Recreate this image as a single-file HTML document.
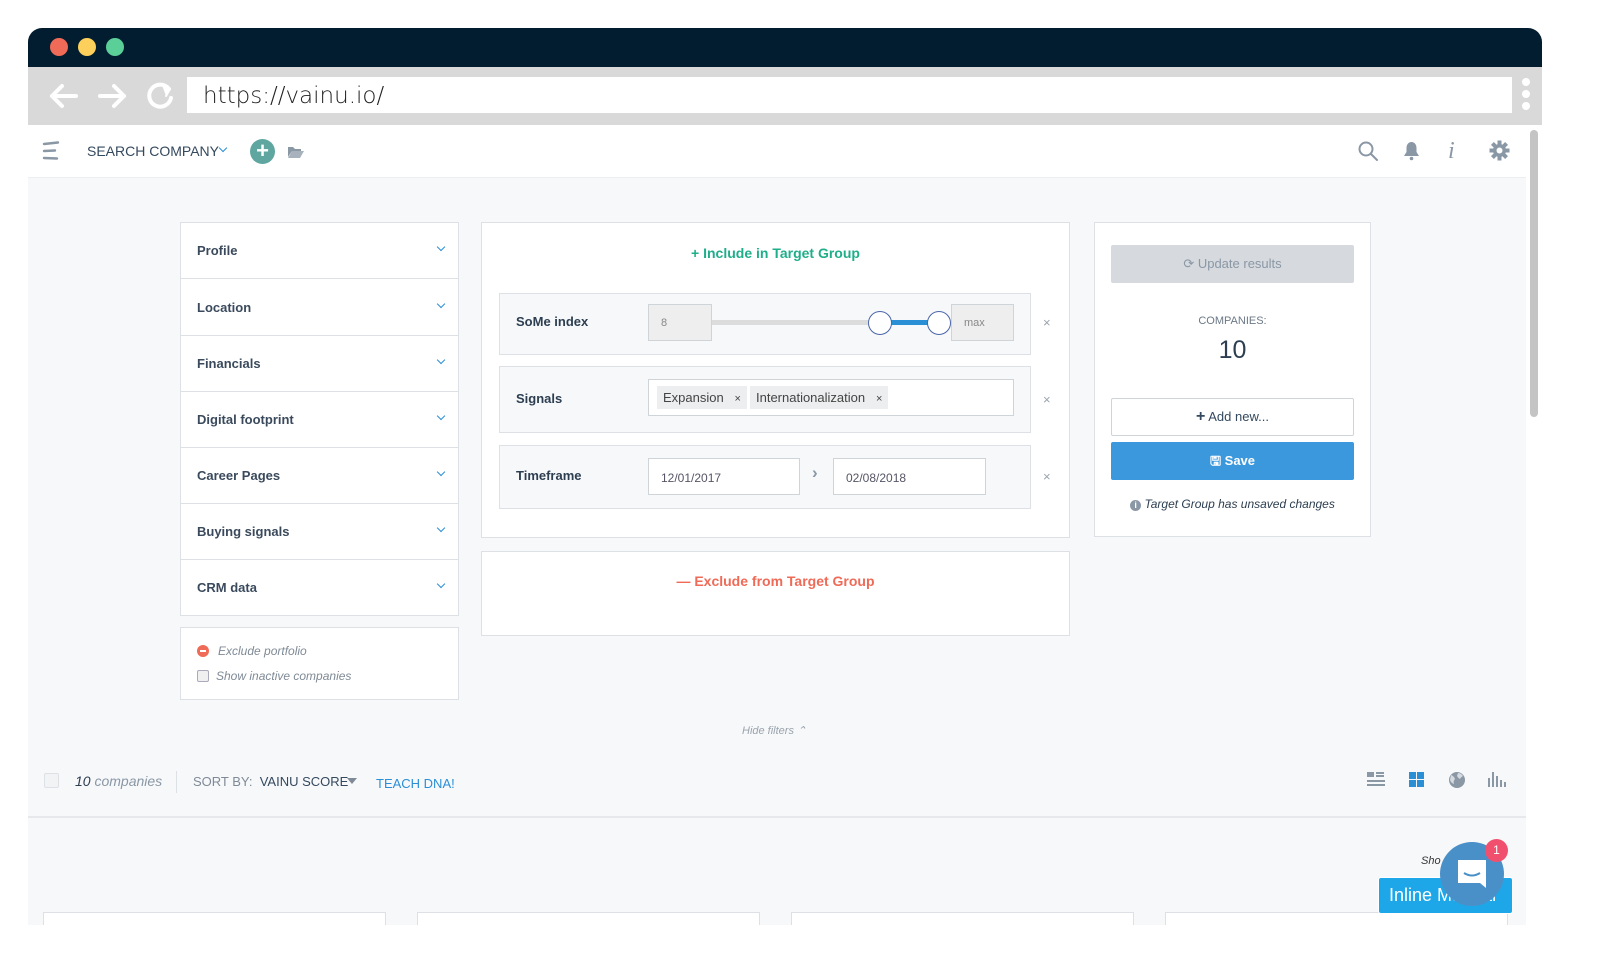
<!DOCTYPE html>
<html><head><meta charset="utf-8"><style>
*{box-sizing:border-box;margin:0;padding:0}
body{width:1600px;height:974px;background:#fff;font-family:"Liberation Sans",sans-serif;position:relative;overflow:hidden;color:#2c3e50}
.a{position:absolute}
.frame{left:28px;top:28px;width:1514px;height:897px;background:#f7f8fa;border-radius:14px 14px 0 0;overflow:hidden}
.box{background:#fff;border:1px solid #dde0e4}
.acc{left:181px;width:277px;height:56px;border-bottom:1px solid #dde0e4;background:#fff;font-size:13px;font-weight:bold;color:#3a4a5c;padding:20px 0 0 16px}
.chev{position:absolute;right:14px;top:21px;width:6px;height:6px;border-right:1.5px solid #2b8fd6;border-bottom:1.5px solid #2b8fd6;transform:rotate(45deg)}
.row{left:499px;width:532px;background:#f7f8fa;border:1px solid #dde0e4}
.lbl{font-size:13px;font-weight:bold;color:#2c3e50}
.x{color:#9aa3ad;font-size:13px}
.inp{background:#fff;border:1px solid #cfd4d9;font-size:12px;color:#556;padding:0 12px}
</style></head><body>
<div class="a frame">
 <div class="a" style="left:0;top:0;width:1514px;height:39px;background:#021d30"></div>
 <div class="a" style="left:22px;top:10px;width:18px;height:18px;border-radius:50%;background:#ef6a57"></div>
 <div class="a" style="left:50px;top:10px;width:18px;height:18px;border-radius:50%;background:#fcd05a"></div>
 <div class="a" style="left:78px;top:10px;width:18px;height:18px;border-radius:50%;background:#5bcf98"></div>
 <div class="a" style="left:0;top:39px;width:1514px;height:58px;background:#d9d9d9"></div>
 <svg class="a" style="left:20px;top:52px" width="130" height="32" viewBox="0 0 130 32" fill="none" stroke="#fff" stroke-width="4" stroke-linecap="round" stroke-linejoin="round">
  <path d="M4 16H28M14 6L4 16L14 26"/><path d="M52 16H76M66 6L76 16L66 26"/><path d="M121 9A11 11 0 1 0 123 18"/><path d="M114 5L122 9L118 16" fill="#fff" stroke-width="2"/>
 </svg>
 <div class="a" style="left:159px;top:49px;width:1325px;height:36px;background:#fff;font-size:23px;color:#222;padding:6px 16px;font-family:'DejaVu Sans',sans-serif;font-weight:300">https://vainu.io/</div>
 <div class="a" style="left:1494px;top:50px;width:8px;height:8px;border-radius:50%;background:#fff"></div>
 <div class="a" style="left:1494px;top:62px;width:8px;height:8px;border-radius:50%;background:#fff"></div>
 <div class="a" style="left:1494px;top:74px;width:8px;height:8px;border-radius:50%;background:#fff"></div>
 <div class="a" style="left:1498px;top:97px;width:16px;height:800px;background:#fff"></div>
 <div class="a" style="left:1502px;top:102px;width:8px;height:287px;border-radius:4px;background:#c4c4c4"></div>
 <div class="a" style="left:0;top:97px;width:1498px;height:53px;background:#fff;border-bottom:1px solid #eceef0"></div>
</div>
<!-- header -->
<svg class="a" style="left:41px;top:141px" width="20" height="20"><g stroke="#8a97a5" stroke-width="2.4" stroke-linecap="round"><path d="M3 3L17 1.5M3 10L14 9.5M3 17L16 17.5"/></g></svg>
<div class="a" style="left:87px;top:143px;font-size:14px;color:#34495e">SEARCH COMPANY</div>
<div class="a" style="left:220px;top:145px;width:6px;height:6px;border-right:1.5px solid #2b8fd6;border-bottom:1.5px solid #2b8fd6;transform:rotate(45deg)"></div>
<div class="a" style="left:250px;top:139px;width:25px;height:25px;border-radius:50%;background:#5ea69f;color:#fff;font-size:22px;font-weight:bold;text-align:center;line-height:24px">+</div>
<svg class="a" style="left:288px;top:145px" width="16" height="13"><path d="M0 2h5l2 2h6v2H4L0 12z" fill="#8a97a5"/><path d="M4 6h12l-4 7H0z" fill="#a7b2bd"/></svg>
<svg class="a" style="left:1357px;top:140px" width="22" height="22" fill="none" stroke="#8a97a5" stroke-width="2"><circle cx="9" cy="9" r="6.5"/><path d="M14 14l6 6" stroke-linecap="round"/></svg>
<svg class="a" style="left:1403px;top:141px" width="17" height="20" fill="#8a97a5"><path d="M8.5 1c-3 0-5 2.5-5 6v4L1 15h15l-2.5-4V7c0-3.5-2-6-5-6z"/><circle cx="8.5" cy="17.5" r="1.8"/></svg>
<div class="a" style="left:1448px;top:138px;font-size:24px;font-style:italic;color:#8a97a5;font-family:'Liberation Serif',serif">i</div>
<svg class="a" style="left:1489px;top:140px" width="21" height="21" viewBox="0 0 21 21"><g fill="#8a97a5" transform="translate(10.5 10.5)"><rect x="-2" y="-10" width="4" height="20"/><rect x="-2" y="-10" width="4" height="20" transform="rotate(45)"/><rect x="-2" y="-10" width="4" height="20" transform="rotate(90)"/><rect x="-2" y="-10" width="4" height="20" transform="rotate(135)"/><circle r="6.5"/></g><circle cx="10.5" cy="10.5" r="3" fill="#fff"/></svg>

<!-- left accordion -->
<div class="a box" style="left:180px;top:222px;width:279px;height:394px"></div>
<div class="a acc" style="top:223px">Profile<span class="chev"></span></div>
<div class="a acc" style="top:280px">Location<span class="chev"></span></div>
<div class="a acc" style="top:336px">Financials<span class="chev"></span></div>
<div class="a acc" style="top:392px">Digital footprint<span class="chev"></span></div>
<div class="a acc" style="top:448px">Career Pages<span class="chev"></span></div>
<div class="a acc" style="top:504px">Buying signals<span class="chev"></span></div>
<div class="a acc" style="top:560px;height:55px;border-bottom:none">CRM data<span class="chev"></span></div>
<div class="a box" style="left:180px;top:627px;width:279px;height:73px"></div>
<div class="a" style="left:197px;top:645px;width:12px;height:12px;border-radius:50%;background:#ef6a57"><div style="margin:5px 3px;height:2px;background:#fff"></div></div>
<div class="a" style="left:218px;top:644px;font-size:12px;font-style:italic;color:#7f8a96">Exclude portfolio</div>
<div class="a" style="left:197px;top:670px;width:12px;height:12px;border:1px solid #aab;border-radius:2px;background:#f0f0f0"></div>
<div class="a" style="left:216px;top:669px;font-size:12px;font-style:italic;color:#7f8a96">Show inactive companies</div>

<!-- middle -->
<div class="a box" style="left:481px;top:222px;width:589px;height:316px"></div>
<div class="a" style="left:481px;top:245px;width:589px;text-align:center;font-size:14px;font-weight:bold;color:#1fae8a">+ Include in Target Group</div>
<div class="a row" style="top:293px;height:62px"></div>
<div class="a lbl" style="left:516px;top:314px">SoMe index</div>
<div class="a inp" style="left:648px;top:304px;width:64px;height:37px;background:#eee;line-height:36px;font-size:11px;color:#888">8</div>
<div class="a" style="left:712px;top:320px;width:238px;height:5px;background:#dcdcdc"></div>
<div class="a" style="left:880px;top:320px;width:60px;height:5px;background:#2b8fd6"></div>
<div class="a" style="left:868px;top:311px;width:24px;height:24px;border-radius:50%;background:#fff;border:1px solid #4a66a8"></div>
<div class="a" style="left:927px;top:311px;width:24px;height:24px;border-radius:50%;background:#fff;border:1px solid #4a66a8"></div>
<div class="a inp" style="left:951px;top:304px;width:63px;height:37px;background:#eee;line-height:36px;font-size:11px;color:#888">max</div>
<div class="a x" style="left:1043px;top:315px">×</div>
<div class="a row" style="top:366px;height:67px"></div>
<div class="a lbl" style="left:516px;top:391px">Signals</div>
<div class="a inp" style="left:648px;top:379px;width:366px;height:37px;padding:6px 8px"><span style="display:inline-block;background:#eceef0;padding:4px 6px;font-size:13px;color:#444">Expansion &nbsp; <span style="font-size:11px">×</span></span><span style="display:inline-block;background:#eceef0;padding:4px 6px;font-size:13px;color:#444;margin-left:3px">Internationalization &nbsp; <span style="font-size:11px">×</span></span></div>
<div class="a x" style="left:1043px;top:392px">×</div>
<div class="a row" style="top:445px;height:64px"></div>
<div class="a lbl" style="left:516px;top:468px">Timeframe</div>
<div class="a inp" style="left:648px;top:458px;width:152px;height:37px;line-height:38px">12/01/2017</div>
<div class="a" style="left:812px;top:463px;color:#8a97a5;font-size:17px;font-weight:bold">›</div>
<div class="a inp" style="left:833px;top:458px;width:153px;height:37px;line-height:38px">02/08/2018</div>
<div class="a x" style="left:1043px;top:469px">×</div>
<div class="a box" style="left:481px;top:551px;width:589px;height:85px"></div>
<div class="a" style="left:481px;top:573px;width:589px;text-align:center;font-size:14px;font-weight:bold;color:#ef6a57">— Exclude from Target Group</div>

<!-- right -->
<div class="a box" style="left:1094px;top:222px;width:277px;height:315px"></div>
<div class="a" style="left:1111px;top:245px;width:243px;height:38px;background:#d6dade;border-radius:2px;text-align:center;line-height:38px;font-size:13px;color:#8a97a5">⟳ Update results</div>
<div class="a" style="left:1094px;top:315px;width:277px;text-align:center;font-size:11px;color:#6b7886">COMPANIES:</div>
<div class="a" style="left:1094px;top:336px;width:277px;text-align:center;font-size:25px;color:#2c3e50">10</div>
<div class="a" style="left:1111px;top:398px;width:243px;height:38px;background:#fff;border:1px solid #cfd4d9;border-radius:2px;text-align:center;line-height:36px;font-size:13px;color:#34495e"><b style="font-size:16px">+</b> Add new...</div>
<div class="a" style="left:1111px;top:442px;width:243px;height:38px;background:#3b98dc;border-radius:2px;text-align:center;line-height:38px;font-size:13px;font-weight:bold;color:#fff">🖫 Save</div>
<div class="a" style="left:1094px;top:497px;width:277px;text-align:center;font-size:12px;font-style:italic;color:#2c3e50"><span style="display:inline-block;width:11px;height:11px;border-radius:50%;background:#8a97a5;color:#fff;font-size:9px;line-height:11px;font-style:normal;font-weight:bold">i</span> Target Group has unsaved changes</div>

<div class="a" style="left:742px;top:724px;font-size:11px;font-style:italic;color:#9aa3ad">Hide filters ⌃</div>

<!-- toolbar -->
<div class="a" style="left:44px;top:773px;width:15px;height:15px;border:1px solid #dde0e4;border-radius:2px;background:#f2f3f5"></div>
<div class="a" style="left:75px;top:773px;font-size:14px;font-style:italic;color:#8a97a5"><span style="color:#2c3e50">10</span> companies</div>
<div class="a" style="left:176px;top:771px;width:1px;height:22px;background:#dde0e4"></div>
<div class="a" style="left:193px;top:774px;font-size:13px;color:#7f8a96">SORT BY: <b style="color:#34495e;font-weight:normal">&nbsp;VAINU SCORE</b></div>
<div class="a" style="left:347px;top:778px;border-left:5px solid transparent;border-right:5px solid transparent;border-top:6px solid #7f8a96"></div>
<div class="a" style="left:376px;top:776px;font-size:13px;color:#2b8fd6">TEACH DNA!</div>
<svg class="a" style="left:1366px;top:770px" width="140" height="20"><g fill="#8a97a5"><rect x="1" y="2" width="7" height="5"/><rect x="10" y="2" width="8" height="2"/><rect x="10" y="5" width="8" height="2"/><rect x="1" y="10" width="18" height="2"/><rect x="1" y="14" width="18" height="2"/></g><g fill="#2b8fd6"><rect x="43" y="2" width="7" height="7"/><rect x="51" y="2" width="7" height="7"/><rect x="43" y="10" width="7" height="7"/><rect x="51" y="10" width="7" height="7"/></g><circle cx="91" cy="10" r="8" fill="#8a97a5"/><path d="M85 5q3 1 4 4q-2 2-1 5q-3-1-4-4zM92 3q3 0 5 3q-2 1-3 3q-2-1-3-3z" fill="#d5dae0"/><g fill="#8a97a5"><rect x="122" y="8" width="2" height="9"/><rect x="126" y="2" width="2" height="15"/><rect x="130" y="6" width="2" height="11"/><rect x="134" y="10" width="2" height="7"/><rect x="138" y="12" width="2" height="5"/></g></svg>
<div class="a" style="left:28px;top:816px;width:1498px;height:2px;background:#e6e8eb"></div>

<div class="a box" style="left:43px;top:912px;width:343px;height:20px"></div>
<div class="a box" style="left:417px;top:912px;width:343px;height:20px"></div>
<div class="a box" style="left:791px;top:912px;width:343px;height:20px"></div>
<div class="a box" style="left:1165px;top:912px;width:343px;height:20px"></div>
<div class="a" style="left:0;top:925px;width:1600px;height:49px;background:#fff"></div>

<div class="a" style="left:1421px;top:855px;font-size:11px;font-style:italic;color:#333">Sho</div>
<div class="a" style="left:1378px;top:877px;width:135px;height:37px;background:#1ea7e8;border-radius:3px;border:1px solid #fff;color:#fff;font-size:18px;line-height:35px;padding-left:10px">Inline Manual</div>
<div class="a" style="left:1440px;top:842px;width:64px;height:64px;border-radius:50%;background:#4a90c8"></div>
<svg class="a" style="left:1455px;top:857px" width="34" height="34"><path d="M3 3h28v28l-6-5H3z" fill="#fff"/><path d="M9 16q8 5 16 0" stroke="#4a90c8" stroke-width="2" fill="none"/></svg>
<div class="a" style="left:1485px;top:839px;width:23px;height:23px;border-radius:50%;background:#f0506e;color:#fff;font-size:12px;text-align:center;line-height:23px">1</div>
</body></html>
